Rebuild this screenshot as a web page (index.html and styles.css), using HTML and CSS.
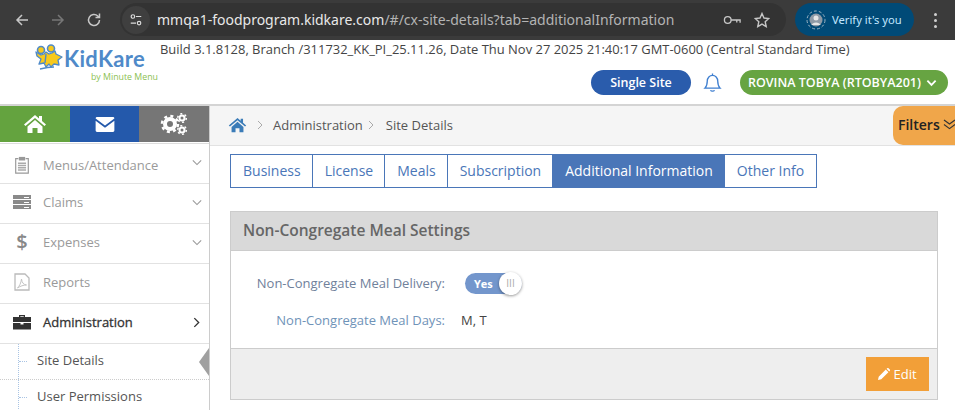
FILE: index.html
```html
<!DOCTYPE html>
<html lang="en">
<head>
    <meta charset="UTF-8">
    <title>Site Details</title>
    <link rel="stylesheet" href="styles.css">
</head>
<body>

<!-- browser toolbar -->
<div class="browser-bar">
    <svg class="nav-icon" viewBox="0 0 16 16"><path d="M14 8H3M8 3L3 8l5 5"/></svg>
    <svg class="nav-icon dim" viewBox="0 0 16 16"><path d="M2 8h11M8 3l5 5-5 5"/></svg>
    <svg class="nav-icon" viewBox="0 0 16 16"><path d="M13.5 8A5.5 5.5 0 1 1 11.8 4L13.5 5.5M13.5 1.5v4h-4"/></svg>
    <div class="address">
        <span class="tune-icon">
            <svg viewBox="0 0 16 16"><circle cx="4.5" cy="4" r="2"/><path d="M8 4h6M2 11.500h6"/><circle cx="11.500" cy="11.500" r="2"/></svg>
        </span>
        <span class="url">mmqa1-foodprogram.kidkare.com<span class="url-rest">/#/cx-site-details?tab=additionalInformation</span></span>
        <svg class="addr-icon key" viewBox="0 0 20 12"><circle cx="5" cy="6" r="3.500"/><path d="M8.500 6H18v3M14.500 6v2.500"/></svg>
        <svg class="addr-icon star" viewBox="0 0 16 16"><path d="M8 1.500l2 4.500 4.800.5-3.600 3.200 1 4.800L8 12.100l-4.200 2.400 1-4.800L1.200 6.500 6 6z"/></svg>
    </div>
    <div class="verify">
        <svg class="avatar" viewBox="0 0 20 20"><circle cx="10" cy="10" r="9" class="avatar-ring"/><circle cx="10" cy="10" r="6.500" class="avatar-bg"/><circle cx="10" cy="8" r="2.500" class="avatar-face"/><path d="M5.500 15c1-3.500 8-3.500 9 0z" class="avatar-face"/></svg>
        Verify it's you
    </div>
    <div class="dots"><i></i><i></i><i></i></div>
</div>

<!-- site header -->
<header class="site-header">
    <div class="logo">
        <svg class="logo-mark" viewBox="0 0 28 27">
            <path d="M1 8l5 3 3-1 2-2 3 2 3-1 3-2 1 3 6 3-4 3 1 5-5-1-3 3-2-3-3 3-2-4-5 1 2-5-4-3z" fill="#f8c91c" stroke="#4f8ac9" stroke-width="1.300" stroke-linejoin="round"/>
            <circle cx="6" cy="6" r="3.500" fill="#f8c91c" stroke="#4f8ac9" stroke-width="1.600"/>
            <circle cx="16" cy="4.500" r="3.500" fill="#f8c91c" stroke="#4f8ac9" stroke-width="1.600"/>
            <path d="M11 10l-1 9M5 25q8-2 14-2" fill="none" stroke="#4f8ac9" stroke-width="1.400"/>
        </svg>
        <div class="logo-words">
            <span class="logo-name">KidKare</span>
            <span class="logo-sub">by Minute Menu</span>
        </div>
    </div>
    <div class="header-right">
        <p class="build">Build 3.1.8128, Branch /311732_KK_PI_25.11.26, Date Thu Nov 27 2025 21:40:17 GMT-0600 (Central Standard Time)</p>
        <div class="header-actions">
            <span class="site-pill">Single Site</span>
            <svg class="bell" viewBox="0 0 20 22"><path d="M2 17c2-2 2.500-4 2.500-7.500C4.500 6 7 3.500 10 3.500s5.500 2.500 5.500 6c0 3.500.5 5.500 2.500 7.500zM10 1.500v2M8 19c.5 1.500 3.500 1.500 4 0"/></svg>
            <span class="user-pill">ROVINA TOBYA (RTOBYA201)
                <svg viewBox="0 0 12 8"><path d="M1.500 1.500L6 6l4.500-4.500"/></svg>
            </span>
        </div>
    </div>
</header>

<div class="page">
    <!-- side menu -->
    <aside class="sidebar">
        <div class="quick-links">
            <a class="quick green">
                <svg viewBox="0 0 24 20"><path d="M12 1L1 10.500l1.500 1.500L12 4l9.500 8 1.500-1.500-4-3.500V2h-3v2.500z"/><path d="M4.500 12.500L12 6l7.500 6.500V19h-5v-5h-5v5h-5z"/></svg>
            </a>
            <a class="quick blue">
                <svg viewBox="0 0 20 16"><path d="M1.500 0h17A1.500 1.500 0 0 1 20 1.500L10 9 0 1.500A1.500 1.500 0 0 1 1.500 0z"/><path d="M0 4l10 7.500L20 4v10.500a1.500 1.500 0 0 1-1.500 1.500h-17A1.500 1.500 0 0 1 0 14.500z"/></svg>
            </a>
            <a class="quick grey">
                <svg viewBox="0 0 28 22">
                    <circle cx="10" cy="11" r="5" fill="none" stroke="#fff" stroke-width="4"/>
                    <circle cx="10" cy="11" r="8" fill="none" stroke="#fff" stroke-width="2.500" stroke-dasharray="3 3.300"/>
                    <circle cx="22" cy="5" r="2.500" fill="none" stroke="#fff" stroke-width="2"/>
                    <circle cx="22" cy="5" r="4.300" fill="none" stroke="#fff" stroke-width="1.500" stroke-dasharray="2 2.500"/>
                    <circle cx="22" cy="17" r="2.500" fill="none" stroke="#fff" stroke-width="2"/>
                    <circle cx="22" cy="17" r="4.300" fill="none" stroke="#fff" stroke-width="1.500" stroke-dasharray="2 2.500"/>
                </svg>
            </a>
        </div>
        <ul class="menu">
            <li class="menu-item first">
                <svg class="menu-icon" viewBox="0 0 18 20"><path d="M5 3H2v16h14V3h-3" fill="none" stroke="#999" stroke-width="1.300"/><rect x="5.500" y="1" width="7" height="4" fill="#999"/><path d="M4.500 8h9M4.500 10.500h9M4.500 13h9M4.500 15.500h9" stroke="#aaa" stroke-width="1.500"/></svg>
                <span class="menu-label">Menus/Attendance</span>
                <svg class="chev" viewBox="0 0 12 8"><path d="M1 1.500l5 5 5-5"/></svg>
            </li>
            <li class="menu-item">
                <svg class="menu-icon" viewBox="0 0 18 16"><path d="M0 1h18v4H0zM0 6h18v4H0zM0 11h18v4H0z" fill="#8a8a8a"/><path d="M11 3.500h5M11 8.500h5M11 13.500h5" stroke="#fff"/></svg>
                <span class="menu-label">Claims</span>
                <svg class="chev" viewBox="0 0 12 8"><path d="M1 1.500l5 5 5-5"/></svg>
            </li>
            <li class="menu-item">
                <span class="menu-icon dollar">$</span>
                <span class="menu-label">Expenses</span>
                <svg class="chev" viewBox="0 0 12 8"><path d="M1 1.500l5 5 5-5"/></svg>
            </li>
            <li class="menu-item">
                <svg class="menu-icon" viewBox="0 0 16 18"><path d="M1 1h10l4 4v12H1z" fill="none" stroke="#bbb" stroke-width="1.300"/><path d="M3.500 15c2-2 3.500-5 4-9 .5 4 2 5.500 5 6-3 0-6 1-9 3z" fill="none" stroke="#c4c4c4"/></svg>
                <span class="menu-label">Reports</span>
            </li>
            <li class="menu-item active">
                <svg class="menu-icon" viewBox="0 0 18 16"><path d="M6 3V1h6v2h-1.300V2.300H7.300V3zM0 3h18v5H0zM0 9h7.500v1.500h3V9H18v6.500H0z" fill="#333"/></svg>
                <span class="menu-label">Administration</span>
                <svg class="chev" viewBox="0 0 8 12"><path d="M1.500 1l5 5-5 5"/></svg>
            </li>
            <li class="sub-item current">Site Details</li>
            <li class="sub-item">User Permissions</li>
        </ul>
    </aside>

    <main class="content">
        <div class="breadcrumb">
            <svg class="crumb-home" viewBox="0 0 24 20"><path d="M12 1L1 10.500l1.500 1.500L12 4l9.500 8 1.500-1.500-4-3.500V2h-3v2.500z"/><path d="M4.500 12.500L12 6l7.500 6.500V19h-5v-5h-5v5h-5z"/></svg>
            <svg class="crumb-sep first" viewBox="0 0 6 10"><path d="M1 1l4 4-4 4"/></svg>
            <span>Administration</span>
            <svg class="crumb-sep" viewBox="0 0 6 10"><path d="M1 1l4 4-4 4"/></svg>
            <span>Site Details</span>
        </div>
        <div class="filters">Filters
            <svg viewBox="0 0 14 12"><path d="M1 1l6 4.500L13 1M1 6l6 4.500L13 6"/></svg>
        </div>

        <nav class="tabs">
            <a class="tab">Business</a>
            <a class="tab">License</a>
            <a class="tab">Meals</a>
            <a class="tab">Subscription</a>
            <a class="tab selected">Additional Information</a>
            <a class="tab">Other Info</a>
        </nav>

        <section class="panel">
            <h2 class="panel-title">Non-Congregate Meal Settings</h2>
            <div class="panel-body">
                <div class="field">
                    <span class="field-label">Non-Congregate Meal Delivery:</span>
                    <span class="toggle"><span class="toggle-text">Yes</span><span class="knob">III</span></span>
                </div>
                <div class="field">
                    <span class="field-label">Non-Congregate Meal Days:</span>
                    <span class="field-value">M, T</span>
                </div>
            </div>
            <div class="panel-footer">
                <a class="edit-btn">
                    <svg viewBox="0 0 12 12"><path d="M0 12l.7-3.300L7.800 1.600l2.600 2.600-7.100 7.100zM8.600.8l.6-.6a1 1 0 0 1 1.300 0l1.300 1.300a1 1 0 0 1 0 1.300l-.6.600z"/></svg>
                    Edit
                </a>
            </div>
        </section>
    </main>
</div>

</body>
</html>
```

FILE: styles.css
```css
* {
    box-sizing: border-box;
}

html, body {
    height: 410px;
    overflow: hidden;
}

body {
    margin: 0;
    font-family: "Open Sans", sans-serif;
    font-size: 13px;
    color: #555;
    background: #fff;
}

/* browser toolbar */
.browser-bar {
    height: 40px;
    background: #3b3b3b;
    display: flex;
    align-items: center;
    padding-left: 14px;
    color: #e3e3e3;
}

.nav-icon {
    width: 16px;
    height: 16px;
    margin-right: 20px;
    fill: none;
    stroke: #c7c7c7;
    stroke-width: 1.500;
}

.nav-icon.dim {
    stroke: #777;
}

.address {
    width: 666px;
    height: 33px;
    margin-left: -2px;
    margin-top: -1px;
    background: #333;
    border-radius: 17px;
    display: flex;
    align-items: center;
    font-family: "Noto Sans", sans-serif;
    font-size: 14px;
}

.tune-icon {
    width: 28px;
    height: 28px;
    margin-left: 2px;
    margin-right: 7px;
    border-radius: 50%;
    background: #3f3f3f;
    display: flex;
    align-items: center;
    justify-content: center;
}

.tune-icon svg {
    width: 14px;
    height: 14px;
    fill: none;
    stroke: #ddd;
    stroke-width: 1.300;
}

.url {
    flex: 1;
    white-space: nowrap;
    color: #e8e8e8;
}

.url-rest {
    color: #b4b4b4;
}

.addr-icon {
    fill: none;
    stroke: #c7c7c7;
    stroke-width: 1.400;
}

.key {
    width: 19px;
    height: 12px;
    margin-right: 12px;
}

.star {
    width: 16px;
    height: 16px;
    margin-right: 16px;
}

.verify {
    width: 119px;
    height: 33px;
    margin-left: 9px;
    margin-top: -1px;
    padding-left: 11px;
    border-radius: 17px;
    background: #004a77;
    display: flex;
    align-items: center;
    gap: 6px;
    font-family: "Noto Sans", sans-serif;
    font-size: 11.200px;
    color: #c2e7ff;
    white-space: nowrap;
}

.avatar {
    width: 20px;
    height: 20px;
    flex: none;
}

.avatar-ring {
    fill: none;
    stroke: #9db4c4;
    stroke-dasharray: 3 2;
}

.avatar-bg {
    fill: #8f9aa6;
}

.avatar-face {
    fill: #e6e6e6;
}

.dots {
    margin-left: 20px;
    display: flex;
    flex-direction: column;
    gap: 3px;
}

.dots i {
    width: 3px;
    height: 3px;
    border-radius: 50%;
    background: #d0d0d0;
}

/* site header */
.site-header {
    height: 66px;
    display: flex;
    border-bottom: 2px solid #d4d4d4;
}

.logo {
    width: 160px;
    padding: 4px 0 0 35px;
    display: flex;
    align-items: flex-start;
}

.logo-mark {
    width: 28px;
    height: 27px;
    flex: none;
}

.logo-words {
    display: flex;
    flex-direction: column;
    align-items: flex-end;
    margin-top: 4px;
    margin-left: 1px;
}

.logo-name {
    font-family: "Lato", sans-serif;
    font-weight: 700;
    font-size: 22px;
    line-height: 22px;
    color: #4f8ac9;
    letter-spacing: 0.300px;
}

.logo-sub {
    margin-top: 2px;
    font-size: 8.800px;
    line-height: 10px;
    color: #8cc152;
    white-space: nowrap;
    margin-right: -13px;
}

.header-right {
    flex: 1;
}

.build {
    margin: 1px 0 0;
    font-size: 12.960px;
    line-height: 17px;
    color: #444;
    white-space: nowrap;
}

.header-actions {
    margin-top: 12px;
    padding-right: 7px;
    display: flex;
    justify-content: flex-end;
    align-items: center;
}

.site-pill {
    width: 100px;
    height: 25px;
    border-radius: 13px;
    background: #2a5cac;
    color: #fff;
    font-weight: 600;
    font-size: 12.500px;
    line-height: 25px;
    text-align: center;
}

.bell {
    width: 19px;
    height: 21px;
    margin: 0 18px 0 12px;
    fill: none;
    stroke: #3f7fd0;
    stroke-width: 1.400;
}

.user-pill {
    width: 208px;
    height: 25px;
    border-radius: 13px;
    background: #67a442;
    color: #fff;
    font-weight: 600;
    font-size: 12.500px;
    line-height: 25px;
    padding-left: 8px;
    display: flex;
    align-items: center;
    gap: 5px;
    white-space: nowrap;
}

.user-pill svg {
    width: 11px;
    height: 8px;
    fill: none;
    stroke: #fff;
    stroke-width: 2;
}

/* side menu */
.page {
    display: flex;
    height: 304px;
}

.sidebar {
    width: 210px;
    flex: none;
    border-right: 1px solid #ccc;
}

.quick-links {
    display: flex;
    height: 37px;
    border-bottom: 1px solid #fff;
}

.quick {
    flex: 1;
    display: flex;
    align-items: center;
    justify-content: center;
}

.quick svg {
    fill: #fff;
    height: 20px;
    width: 24px;
}

.quick.green {
    background: #64a33f;
}

.quick.blue {
    background: #2459ab;
}

.quick.blue svg {
    height: 15px;
}

.quick.grey {
    background: #767676;
}

.quick.grey svg {
    width: 28px;
    height: 22px;
    fill: none;
}

.menu {
    list-style: none;
    margin: 0;
    padding: 0;
    border-top: 1px solid #ddd;
}

.menu-item {
    height: 40px;
    display: flex;
    align-items: center;
    border-bottom: 1px solid #e2e2e2;
    padding: 0 7px 4px 13px;
    color: #9a9a9a;
}

.menu-item.first {
    padding-top: 2px;
    padding-bottom: 0;
}

.menu-icon {
    width: 18px;
    height: 18px;
    flex: none;
    margin-right: 12px;
}

.dollar {
    text-align: center;
    font-size: 20px;
    font-weight: 600;
    line-height: 18px;
    color: #888;
}

.menu-label {
    flex: 1;
}

.chev {
    width: 10px;
    height: 7px;
    fill: none;
    stroke: #999;
    stroke-width: 1.300;
    margin-top: 2px;
}

.menu-item.first .chev {
    margin-top: -4px;
}

.menu-item.active {
    color: #333;
    font-weight: 500;
    -webkit-text-stroke: 0.3px #333;
}

.menu-item.active .chev {
    width: 7px;
    height: 11px;
    margin-right: 2px;
    stroke: #333;
    stroke-width: 1.500;
}

.sub-item {
    position: relative;
    height: 36px;
    padding-left: 37px;
    line-height: 32px;
    color: #555;
    border-bottom: 1px dotted #ccc;
    background: linear-gradient(#a9c4e4 50%, transparent 0) 18px 0 / 1px 2px repeat-y;
}

.sub-item::before {
    content: "";
    position: absolute;
    left: 19px;
    top: 17px;
    width: 8px;
    border-top: 1px dotted #a9c4e4;
}

.sub-item.current::after {
    content: "";
    position: absolute;
    right: 0;
    top: 4px;
    border: 14px solid transparent;
    border-right: 10px solid #a0a0a0;
    border-left: 0;
}

/* breadcrumb and filters */
.content {
    flex: 1;
    position: relative;
}

.breadcrumb {
    height: 40px;
    background: #f5f5f5;
    border-bottom: 1px solid #e2e2e2;
    display: flex;
    align-items: center;
    padding: 0 0 2px 18px;
    color: #555;
}

.crumb-home {
    width: 19px;
    height: 16px;
    fill: #3b7cb8;
}

.crumb-sep {
    width: 6px;
    height: 10px;
    margin: 0 12px 0 5px;
    fill: none;
    stroke: #aaa;
    stroke-width: 1;
}

.crumb-sep.first {
    margin: 0 10px 0 10px;
}

.filters {
    position: absolute;
    top: 0;
    right: 0;
    width: 62px;
    height: 39px;
    background: #f0a64a;
    border-radius: 10px 0 0 10px;
    padding-left: 5px;
    padding-bottom: 2px;
    font-weight: 600;
    font-size: 14px;
    color: #222;
    display: flex;
    align-items: center;
    gap: 3px;
    overflow: hidden;
}

.filters svg {
    width: 13px;
    height: 11px;
    flex: none;
    fill: none;
    stroke: #333;
    stroke-width: 1.300;
}

/* tabs */
.tabs {
    display: flex;
    margin: 8px 0 0 20px;
    width: 587px;
    height: 34px;
    border: 1px solid #4a76b8;
}

.tab {
    padding: 0 11px 0 12px;
    font-size: 14px;
    line-height: 32px;
    color: #4a76b8;
    border-right: 1px solid #4a76b8;
    white-space: nowrap;
}

.tab:last-child {
    border-right: 0;
}

.tab.selected {
    background: #4a76b8;
    color: #fff;
}

/* panel */
.panel {
    margin: 23px 17px 0 20px;
    border: 1px solid #ccc;
}

.panel-title {
    margin: 0;
    height: 39px;
    padding-left: 12px;
    background: #d9d9d9;
    border-bottom: 1px solid #ccc;
    font-size: 15.500px;
    font-weight: 600;
    line-height: 37px;
    color: #666;
}

.panel-body {
    height: 97px;
    padding-top: 19px;
}

.field {
    display: flex;
    align-items: center;
    height: 26px;
    margin-bottom: 11px;
}

.field-label {
    width: 214px;
    text-align: right;
    font-size: 13px;
    color: #70819b;
}

.field:last-child .field-label {
    color: #6f93b8;
}

.field-value {
    margin-left: 16px;
    font-size: 13px;
    color: #444;
}

.toggle {
    width: 57px;
    height: 21px;
    margin: 1px 0 0 20px;
    border-radius: 11px;
    background: #7396cc;
    display: flex;
    align-items: center;
    position: relative;
}

.toggle-text {
    margin-left: 9px;
    font-size: 11px;
    font-weight: 700;
    color: #fff;
}

.knob {
    position: absolute;
    right: 0;
    top: -1px;
    width: 23px;
    height: 23px;
    border-radius: 50%;
    background: #fff;
    box-shadow: 0 1px 3px rgba(0, 0, 0, 0.4);
    font-size: 10px;
    line-height: 23px;
    text-align: center;
    color: #aaa;
}

.panel-footer {
    height: 51px;
    background: #eee;
    border-top: 1px solid #ccc;
    display: flex;
    justify-content: flex-end;
    padding: 8px 8px 0 0;
}

.edit-btn {
    width: 63px;
    height: 34px;
    background: #f29f38;
    color: #fff;
    font-size: 13px;
    display: flex;
    align-items: center;
    justify-content: center;
    gap: 3px;
}

.edit-btn svg {
    width: 12px;
    height: 12px;
    fill: #fff;
}
```
